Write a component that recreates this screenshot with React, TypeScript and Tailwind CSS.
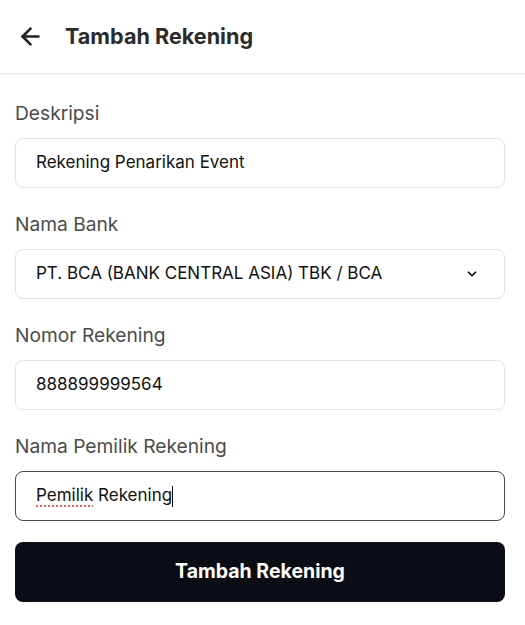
import React from 'react';
import { ArrowLeft, ChevronDown } from 'lucide-react';

const font = { fontFamily: 'Inter, "Noto Sans", sans-serif' };

const Label: React.FC<{ children: React.ReactNode }> = ({ children }) => (
    <label className="block text-[19.2px] leading-[28px] text-[#4b4b4b] mb-[11px]">{children}</label>
);

const baseCls = 'w-full h-[50px] rounded-lg border bg-white px-[20px] flex items-center text-[17px] text-[#111]';
const boxCls = `${baseCls} border-[#e2e2e2]`;

export default function App() {
    return (
        <div className="w-[525px] min-h-[625px] bg-white" style={font}>
            {/* Header */}
            <div className="h-[74px] flex items-center px-[17px] border-b border-[#ececec] shadow-[0_1px_3px_rgba(0,0,0,0.04)]">
                <ArrowLeft className="w-[27px] h-[27px] text-[#222]" strokeWidth={2.4} />
                <h1 className="ml-[21px] text-[21.6px] font-bold text-[#2b2b2b]">Tambah Rekening</h1>
            </div>

            {/* Form */}
            <div className="pl-[15px] pr-[20px] pt-[25px] flex flex-col gap-[22px]">
                <div>
                    <Label>Deskripsi</Label>
                    <div className={boxCls}>Rekening Penarikan Event</div>
                </div>
                <div>
                    <Label>Nama Bank</Label>
                    <div className={`${boxCls} justify-between pr-[25px]`}>
                        <span>PT. BCA (BANK CENTRAL ASIA) TBK / BCA</span>
                        <ChevronDown className="w-[14px] h-[14px] text-[#111]" strokeWidth={3} />
                    </div>
                </div>
                <div>
                    <Label>Nomor Rekening</Label>
                    <div className={boxCls}>888899999564</div>
                </div>
                <div>
                    <Label>Nama Pemilik Rekening</Label>
                    <div className={`${baseCls} border-[#4a4a4a]`}>
                        <span className="underline decoration-dotted decoration-[#e06060] decoration-2 underline-offset-[4px]">Pemilik</span>
                        <span>&nbsp;Rekening</span>
                        <span className="inline-block w-px h-[21px] bg-[#111]" />
                    </div>
                </div>
                <button className="-mt-px w-full h-[60px] rounded-lg bg-[#0b0d14] text-white text-[19.5px] font-bold">
                    Tambah Rekening
                </button>
            </div>
        </div>
    );
}
